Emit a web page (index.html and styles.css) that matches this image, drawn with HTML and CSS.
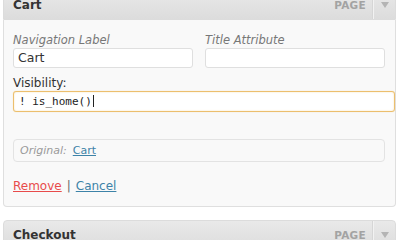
FILE: index.html
```html
<!DOCTYPE html>
<html>
<head>
<meta charset="utf-8">
<link rel="stylesheet" href="styles.css">
</head>
<body>
<div class="menu">
  <div class="item first">
    <div class="item-bar">
      <span class="item-title">Cart</span>
      <span class="item-type">Page</span>
      <span class="item-toggle"><span class="arrow"></span></span>
    </div>
    <div class="item-settings">
      <div class="row two">
        <div class="field-group">
          <div class="label">Navigation Label</div>
          <div class="input">Cart</div>
        </div>
        <div class="field-group">
          <div class="label">Title Attribute</div>
          <div class="input"></div>
        </div>
      </div>
      <div class="field-group wide">
        <div class="label plain">Visibility:</div>
        <div class="input focus mono">! is_home()<span class="caret"></span></div>
      </div>
      <div class="original">
        <span class="orig-label">Original:</span>
        <a class="link blue" href="#">Cart</a>
      </div>
      <div class="actions">
        <a class="link red" href="#">Remove</a>
        <span class="sep">|</span>
        <a class="link blue" href="#">Cancel</a>
      </div>
    </div>
  </div>
  <div class="item">
    <div class="item-bar">
      <span class="item-title">Checkout</span>
      <span class="item-type">Page</span>
      <span class="item-toggle"><span class="arrow"></span></span>
    </div>
  </div>
</div>
</body>
</html>
```
FILE: styles.css
```css
html, body {
  margin: 0;
  padding: 0;
  background: #ffffff;
}
body {
  font-family: "DejaVu Sans", Verdana, sans-serif;
  font-size: 11px;
  color: #333333;
  overflow: hidden;
}
.menu {
  padding-left: 3px;
  width: 393px;
}
.item {
  margin-bottom: 13px;
}
.item.first {
  margin-top: -10px;
}
.item-bar {
  height: 28px;
  display: flex;
  align-items: center;
  background: linear-gradient(to bottom, #e9e9e9, #dcdcdc);
  border: 1px solid #dcdcdc;
  border-radius: 4px 4px 0 0;
}
.item:not(.first) .item-bar {
  border-radius: 4px;
}
.item-title {
  padding-left: 9px;
  font-weight: bold;
  font-size: 12px;
  color: #333333;
}
.item-type {
  margin-left: auto;
  padding-right: 7px;
  text-transform: uppercase;
  font-weight: bold;
  font-size: 10.5px;
  letter-spacing: 0.3px;
  color: #a3a3a3;
}
.item-toggle {
  align-self: stretch;
  width: 21px;
  border-left: 1px solid #f2f2f2;
  box-shadow: -1px 0 0 #d6d6d6;
  display: flex;
  align-items: center;
  justify-content: center;
}
.arrow {
  width: 0;
  height: 0;
  border-left: 4px solid transparent;
  border-right: 4px solid transparent;
  border-top: 6px solid #b4b4b4;
}
.item-settings {
  background: #f9f9f9;
  border: 1px solid #dfdfdf;
  border-top: none;
  border-radius: 0 0 4px 4px;
  padding: 12px 0 12px 9px;
}
.row.two {
  display: flex;
  gap: 12px;
}
.field-group {
  display: flex;
  flex-direction: column;
}
.label {
  font-style: italic;
  color: #777777;
  font-size: 11.5px;
  line-height: 16px;
}
.label.plain {
  font-style: normal;
  color: #333333;
  font-size: 12px;
}
.input {
  box-sizing: border-box;
  width: 180px;
  height: 20px;
  background: #ffffff;
  border: 1px solid #dfdfdf;
  border-radius: 3px;
  padding: 0 4px;
  font-size: 12.5px;
  line-height: 18px;
  color: #333333;
}
.wide {
  margin-top: 7px;
}
.input.focus {
  width: 382px;
  height: 21px;
  border-color: #ecbf6e;
  box-shadow: inset 0 0 2px #f6e3bc, 0 0 1px #f3d79f;
  padding-left: 5px;
}
.mono {
  font-family: "DejaVu Sans Mono", "Liberation Mono", monospace;
  font-size: 11px;
  line-height: 19px;
  color: #222222;
}
.caret {
  display: inline-block;
  width: 1px;
  height: 12px;
  background: #222222;
  vertical-align: -2px;
  margin-left: 1px;
}
.original {
  box-sizing: border-box;
  width: 372px;
  height: 23px;
  margin-top: 27px;
  border: 1px solid #e3e3e3;
  border-radius: 4px;
  display: flex;
  align-items: center;
  gap: 6px;
  padding-left: 6px;
}
.orig-label {
  font-style: italic;
  color: #999999;
}
.link {
  text-decoration: underline;
}
.link.blue {
  color: #3d83a8;
}
.link.red {
  color: #e84b4b;
}
.actions {
  margin-top: 17px;
  display: flex;
  gap: 5px;
  font-size: 12px;
  line-height: 15px;
}
.sep {
  color: #666666;
}
```
